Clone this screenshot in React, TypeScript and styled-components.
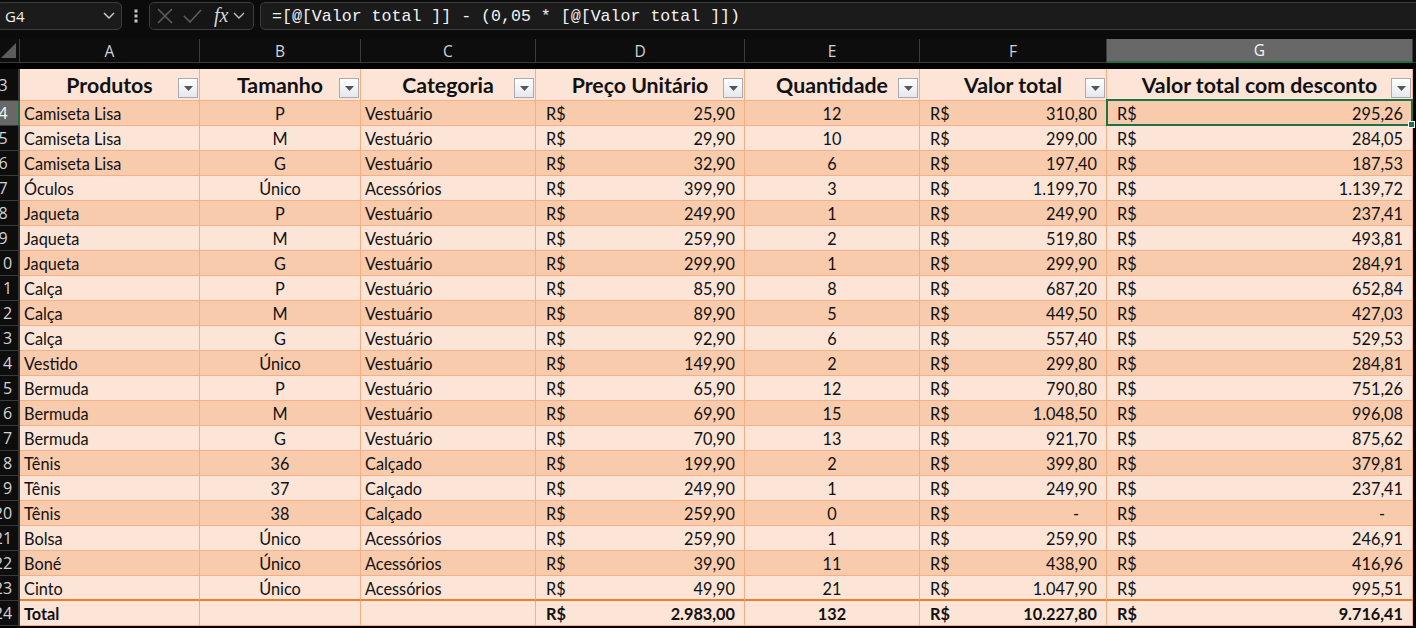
import React from "react";
import styled, { createGlobalStyle, css } from "styled-components";

const GlobalStyle = createGlobalStyle`
  html, body { margin: 0; padding: 0; background: #000; overflow: hidden; }
  #root { width: 1416px; height: 628px; overflow: hidden; background: #000; }
`;

const COLS = "20px 180px 161px 175px 209px 175px 187px 306px 1fr";
const CELL_FONT = `"Lato", "Liberation Sans", sans-serif`;
const UI_FONT = `"Open Sans", "Noto Sans", sans-serif`;
const MONO_FONT = `"Liberation Mono", "DejaVu Sans Mono", monospace`;

const LIGHT = "#FCE4D6";
const DARK = "#F8CBAD";
const LINE = "#F4B084";
const ACCENT = "#ED7D31";
const GREEN = "#1E7145";

/* ---------- formula bar ---------- */
const Toolbar = styled.div`
  display: flex;
  align-items: flex-start;
  height: 39px;
  padding-top: 2px;
  box-sizing: border-box;
  background: #0b0b0b;
  overflow: hidden;
`;

const NameBox = styled.div`
  box-sizing: border-box;
  width: 126px;
  margin-left: -4px;
  height: 28px;
  display: flex;
  align-items: center;
  justify-content: space-between;
  padding: 0 6px 0 8px;
  border: 1px solid #3c3c3c;
  border-radius: 5px;
  background: #1b1b1b;
  color: #f2f2f2;
  font: 15px ${UI_FONT};
`;

const DotsSlot = styled.div`
  width: 27px;
  height: 28px;
  display: flex;
  align-items: center;
  justify-content: center;
`;

const FxGroup = styled.div`
  box-sizing: border-box;
  width: 105px;
  height: 28px;
  border: 1px solid #3c3c3c;
  border-radius: 5px;
  background: #151515;
  display: flex;
  align-items: center;
  padding-left: 7px;
`;

const FxIcon = styled.span<{ $gap?: number }>`
  display: flex;
  align-items: center;
  margin-left: ${(p) => p.$gap ?? 0}px;
`;

const FxLabel = styled.span`
  margin-left: 12px;
  font: italic 20px "Liberation Serif", "DejaVu Serif", serif;
  color: #d6d6d6;
  line-height: 1;
  padding-bottom: 2px;
`;

const FormulaBox = styled.div`
  box-sizing: border-box;
  flex: 1;
  margin-left: 6px;
  margin-right: -8px;
  height: 28px;
  border: 1px solid #3c3c3c;
  border-radius: 5px;
  background: #1b1b1b;
  display: flex;
  align-items: center;
  padding-left: 11px;
  color: #f2f2f2;
  font: 16.6px ${MONO_FONT};
  white-space: pre;
`;

/* ---------- column headers ---------- */
const ColHeadRow = styled.div`
  display: grid;
  grid-template-columns: ${COLS};
  height: 24px;
  background: #0d0d0d;
`;

const Corner = styled.div`
  box-sizing: border-box;
  border-right: 1px solid #3a3a3a;
  border-bottom: 1px solid #3a3a3a;
  display: flex;
  align-items: flex-end;
  justify-content: flex-end;
  padding: 0 3px 4px 0;
`;

const ColLetter = styled.div<{ $active?: boolean }>`
  box-sizing: border-box;
  display: flex;
  align-items: center;
  justify-content: center;
  color: #d4d4d4;
  font: 15.5px ${UI_FONT};
  border-right: 1px solid #3a3a3a;
  border-bottom: 1px solid #3a3a3a;
  ${(p) =>
    p.$active &&
    css`
      background: #686868;
      color: #f4f4f4;
      border-bottom: 2px solid ${GREEN};
    `}
`;

const ColFiller = styled.div`
  border-bottom: 1px solid #3a3a3a;
`;

const Strip = styled.div`
  height: 6px;
  background: #000;
`;

/* ---------- table ---------- */
const Cell = styled.div<{ $align?: "left" | "center" | "right"; $bold?: boolean }>`
  position: relative;
  box-sizing: border-box;
  display: flex;
  align-items: center;
  justify-content: ${(p) =>
    p.$align === "center" ? "center" : p.$align === "right" ? "flex-end" : "flex-start"};
  padding: 1px 4px 0 4px;
  border-right: 1px solid ${LINE};
  border-bottom: 1px solid ${LINE};
  font: ${(p) => (p.$bold ? 700 : 400)} 16.3px ${CELL_FONT};
  color: #111;
  white-space: nowrap;
  overflow: visible;
`;

const MoneyCell = styled(Cell)`
  justify-content: space-between;
  padding: 1px 9px 0 10px;
`;

const Dash = styled.span`
  margin-right: 18px;
`;

/* the row-number column is scrolled: numbers are centred near its left edge and clipped */
const RowHead = styled.div<{ $active?: boolean }>`
  box-sizing: border-box;
  display: flex;
  align-items: center;
  justify-content: center;
  padding-right: 12px;
  overflow: hidden;
  white-space: nowrap;
  background: #0d0d0d;
  color: #d4d4d4;
  font: 16px ${UI_FONT};
  border-right: 2px solid #3a3a3a;
  border-bottom: 1px solid #3a3a3a;
  ${(p) =>
    p.$active &&
    css`
      background: #686868;
      color: #fafafa;
      border-right: 2px solid ${GREEN};
    `}
`;

const Filler = styled.div`
  background: #000;
`;

const Row = styled.div<{ $tone: "light" | "dark"; $lastBody?: boolean }>`
  display: grid;
  grid-template-columns: ${COLS};
  height: 25px;
  ${Cell} {
    background: ${(p) => (p.$tone === "dark" ? DARK : LIGHT)};
  }
  ${(p) =>
    p.$lastBody &&
    css`
      ${Cell} {
        border-bottom: 2px solid ${ACCENT};
      }
    `}
`;

const HeaderRow = styled.div`
  display: grid;
  grid-template-columns: ${COLS};
  height: 32px;
`;

const HeadCell = styled.div`
  position: relative;
  box-sizing: border-box;
  display: flex;
  align-items: flex-end;
  justify-content: center;
  padding-bottom: 2px;
  background: ${LIGHT};
  border-right: 1px solid ${LINE};
  border-bottom: 1px solid ${LINE};
  font: 700 21.3px ${CELL_FONT};
  color: #111;
  white-space: nowrap;
`;

const FilterButton = styled.div`
  position: absolute;
  right: 1px;
  bottom: 2px;
  box-sizing: border-box;
  width: 20px;
  height: 20px;
  border: 1px solid #a8abb1;
  background: linear-gradient(#fefefe, #e4e8ee);
  display: flex;
  align-items: center;
  justify-content: center;
`;

const SelectionFrame = styled.div`
  position: absolute;
  top: -2px;
  left: -1px;
  right: -1px;
  bottom: -1px;
  border: 2px solid ${GREEN};
  pointer-events: none;
  z-index: 2;
`;

const Handle = styled.div`
  position: absolute;
  right: -4px;
  bottom: -4px;
  width: 5px;
  height: 5px;
  background: ${GREEN};
  border: 1px solid #fff;
  z-index: 3;
`;

/* ---------- icons ---------- */
const Chevron = ({ color = "#d0d0d0", size = 12 }: { color?: string; size?: number }) => (
  <svg width={size} height={size * 0.6} viewBox="0 0 12 7">
    <polyline points="1,1 6,6 11,1" fill="none" stroke={color} strokeWidth="1.4" />
  </svg>
);

const Dots = () => (
  <svg width="4" height="14" viewBox="0 0 4 14">
    <rect x="0.5" y="0.5" width="3" height="3" fill="#c8c8c8" />
    <rect x="0.5" y="5.5" width="3" height="3" fill="#c8c8c8" />
    <rect x="0.5" y="10.5" width="3" height="3" fill="#c8c8c8" />
  </svg>
);

const CancelIcon = () => (
  <svg width="16" height="16" viewBox="0 0 16 16">
    <path d="M1 1 L15 15 M15 1 L1 15" stroke="#5e5e5e" strokeWidth="1.5" fill="none" />
  </svg>
);

const CheckIcon = () => (
  <svg width="19" height="14" viewBox="0 0 19 14">
    <polyline points="1,7 7,13 18,1" stroke="#5e5e5e" strokeWidth="1.5" fill="none" />
  </svg>
);

const FilterArrow = () => (
  <svg width="9" height="5" viewBox="0 0 9 5">
    <polygon points="0,0 9,0 4.5,5" fill="#555" />
  </svg>
);

const CornerTriangle = () => (
  <svg width="15" height="15" viewBox="0 0 15 15">
    <polygon points="15,0 15,15 0,15" fill="#5c5c5c" />
  </svg>
);

/* ---------- data ---------- */
type Item = [string, string, string, string, string, string, string];

const ITEMS: Item[] = [
  ["Camiseta Lisa", "P", "Vestuário", "25,90", "12", "310,80", "295,26"],
  ["Camiseta Lisa", "M", "Vestuário", "29,90", "10", "299,00", "284,05"],
  ["Camiseta Lisa", "G", "Vestuário", "32,90", "6", "197,40", "187,53"],
  ["Óculos", "Único", "Acessórios", "399,90", "3", "1.199,70", "1.139,72"],
  ["Jaqueta", "P", "Vestuário", "249,90", "1", "249,90", "237,41"],
  ["Jaqueta", "M", "Vestuário", "259,90", "2", "519,80", "493,81"],
  ["Jaqueta", "G", "Vestuário", "299,90", "1", "299,90", "284,91"],
  ["Calça", "P", "Vestuário", "85,90", "8", "687,20", "652,84"],
  ["Calça", "M", "Vestuário", "89,90", "5", "449,50", "427,03"],
  ["Calça", "G", "Vestuário", "92,90", "6", "557,40", "529,53"],
  ["Vestido", "Único", "Vestuário", "149,90", "2", "299,80", "284,81"],
  ["Bermuda", "P", "Vestuário", "65,90", "12", "790,80", "751,26"],
  ["Bermuda", "M", "Vestuário", "69,90", "15", "1.048,50", "996,08"],
  ["Bermuda", "G", "Vestuário", "70,90", "13", "921,70", "875,62"],
  ["Tênis", "36", "Calçado", "199,90", "2", "399,80", "379,81"],
  ["Tênis", "37", "Calçado", "249,90", "1", "249,90", "237,41"],
  ["Tênis", "38", "Calçado", "259,90", "0", "-", "-"],
  ["Bolsa", "Único", "Acessórios", "259,90", "1", "259,90", "246,91"],
  ["Boné", "Único", "Acessórios", "39,90", "11", "438,90", "416,96"],
  ["Cinto", "Único", "Acessórios", "49,90", "21", "1.047,90", "995,51"],
];

const HEADERS = [
  "Produtos",
  "Tamanho",
  "Categoria",
  "Preço Unitário",
  "Quantidade",
  "Valor total",
  "Valor total com desconto",
];

const LETTERS = ["A", "B", "C", "D", "E", "F", "G"];

const Money = ({ value, bold, selected }: { value: string; bold?: boolean; selected?: boolean }) => (
  <MoneyCell $bold={bold}>
    <span>R$</span>
    {value === "-" ? <Dash>-</Dash> : <span>{value}</span>}
    {selected && (
      <SelectionFrame>
        <Handle />
      </SelectionFrame>
    )}
  </MoneyCell>
);

export default function App() {
  return (
    <>
      <GlobalStyle />
      <Toolbar>
        <NameBox>
          <span>G4</span>
          <Chevron />
        </NameBox>
        <DotsSlot>
          <Dots />
        </DotsSlot>
        <FxGroup>
          <FxIcon>
            <CancelIcon />
          </FxIcon>
          <FxIcon $gap={10}>
            <CheckIcon />
          </FxIcon>
          <FxLabel>fx</FxLabel>
          <FxIcon $gap={5}>
            <Chevron color="#bdbdbd" />
          </FxIcon>
        </FxGroup>
        <FormulaBox>{"=[@[Valor total ]] - (0,05 * [@[Valor total ]])"}</FormulaBox>
      </Toolbar>

      <ColHeadRow>
        <Corner>
          <CornerTriangle />
        </Corner>
        {LETTERS.map((l) => (
          <ColLetter key={l} $active={l === "G"}>
            {l}
          </ColLetter>
        ))}
        <ColFiller />
      </ColHeadRow>
      <Strip />

      <HeaderRow>
        <RowHead>3</RowHead>
        {HEADERS.map((h) => (
          <HeadCell key={h}>
            {h}
            <FilterButton>
              <FilterArrow />
            </FilterButton>
          </HeadCell>
        ))}
        <Filler />
      </HeaderRow>

      {ITEMS.map((it, i) => {
        const n = i + 4;
        return (
          <Row key={n} $tone={n % 2 === 0 ? "dark" : "light"} $lastBody={n === 23}>
            <RowHead $active={n === 4}>{n}</RowHead>
            <Cell>{it[0]}</Cell>
            <Cell $align="center">{it[1]}</Cell>
            <Cell>{it[2]}</Cell>
            <Money value={it[3]} />
            <Cell $align="center">{it[4]}</Cell>
            <Money value={it[5]} />
            <Money value={it[6]} selected={n === 4} />
            <Filler />
          </Row>
        );
      })}

      <Row $tone="light">
        <RowHead>24</RowHead>
        <Cell $bold>Total</Cell>
        <Cell />
        <Cell />
        <Money value="2.983,00" bold />
        <Cell $align="center" $bold>
          132
        </Cell>
        <Money value="10.227,80" bold />
        <Money value="9.716,41" bold />
        <Filler />
      </Row>
    </>
  );
}
